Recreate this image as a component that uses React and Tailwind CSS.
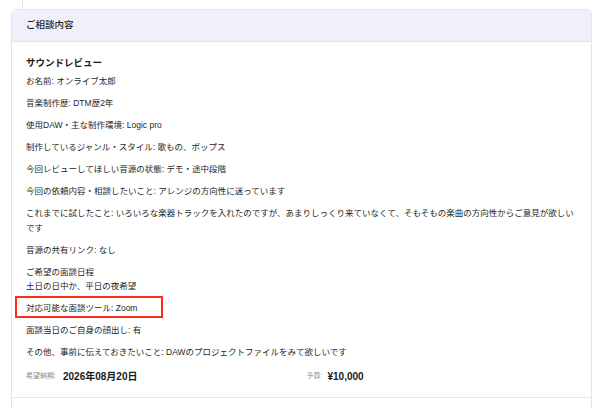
import React from "react";

const font = { fontFamily: '"Liberation Sans", "Noto Sans CJK JP", sans-serif' };

const lines = [
  ["お名前: オンライブ太郎"],
  ["音楽制作歴: DTM歴2年"],
  ["使用DAW・主な制作環境: Logic pro"],
  ["制作しているジャンル・スタイル: 歌もの、ポップス"],
  ["今回レビューしてほしい音源の状態: デモ・途中段階"],
  ["今回の依頼内容・相談したいこと: アレンジの方向性に迷っています"],
  ["これまでに試したこと: いろいろな楽器トラックを入れたのですが、あまりしっくり来ていなくて、そもそもの楽曲の方向性からご意見が欲しいです"],
  ["音源の共有リンク: なし"],
  ["ご希望の面談日程", "土日の日中か、平日の夜希望"],
];

export default function App() {
  return (
    <div
      className="w-[600px] h-[408px] bg-white overflow-hidden text-[#262626]"
      style={font}
    >
      <div className="h-[9px] ml-[22px] border-l border-[#e6e6ee]" />
      <div className="ml-[11px] w-[581px] border border-[#e4e4ee] rounded-t-[5px]">
        <div className="h-[32px] bg-[#f1f0fa] border-b border-[#e4e4ee] rounded-t-[5px] px-[14px] flex items-center">
          <span className="text-[9.5px] font-medium text-[#1e1e1e]">ご相談内容</span>
        </div>
        <div className="px-[14px] pt-[13px] pb-[13px] border-b border-[#e8e8f0]">
          <div className="text-[9.5px] leading-[15px] font-bold text-[#1a1a1a] mb-[4px]">
            サウンドレビュー
          </div>
          <div className="flex flex-col gap-[7.5px] text-[8.5px] leading-[14.5px]">
            {lines.map((l, i) => (
              <div key={i}>
                {l.map((t, j) => (
                  <div key={j}>{t}</div>
                ))}
              </div>
            ))}
            <div className="relative">
              対応可能な面談ツール: Zoom
              <div className="absolute -left-[11px] -top-[5.5px] w-[148px] h-[22px] border-[2.5px] border-[#ff2a1a]" />
            </div>
            <div>面談当日のご自身の顔出し: 有</div>
            <div>その他、事前に伝えておきたいこと: DAWのプロジェクトファイルをみて欲しいです</div>
          </div>
          <div className="grid grid-cols-2 mt-[9px] items-center">
            <div className="flex items-center">
              <span className="text-[7px] text-[#8a8f9c] w-[37px]">希望納期:</span>
              <span className="text-[10px] leading-[15px] font-bold text-[#1a1a1a]">2026年08月20日</span>
            </div>
            <div className="flex items-center pl-[5px]">
              <span className="text-[7px] text-[#8a8f9c] w-[21px]">予算:</span>
              <span className="text-[10px] leading-[15px] font-bold text-[#1a1a1a]">¥10,000</span>
            </div>
          </div>
        </div>
        <div className="h-[20px]" />
      </div>
    </div>
  );
}
